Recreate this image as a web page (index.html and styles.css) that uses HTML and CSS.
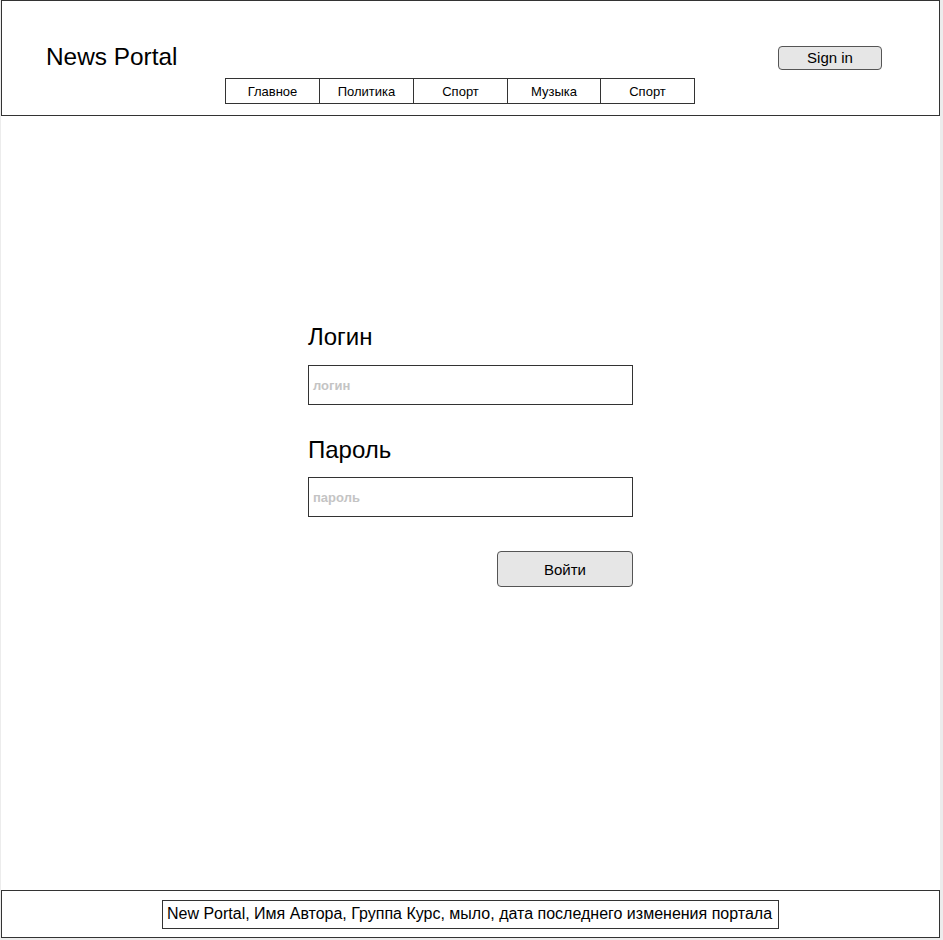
FILE: index.html
```html
<!DOCTYPE html>
<html lang="ru">
<head>
<meta charset="utf-8">
<title>News Portal</title>
<link rel="stylesheet" href="styles.css">
</head>
<body>
<div class="page">
  <header class="header">
    <div class="header-row">
      <div class="logo">News Portal</div>
      <button class="signin">Sign in</button>
    </div>
    <nav class="nav">
      <a class="nav-item">Главное</a>
      <a class="nav-item">Политика</a>
      <a class="nav-item">Спорт</a>
      <a class="nav-item narrow">Музыка</a>
      <a class="nav-item">Спорт</a>
    </nav>
  </header>
  <main class="main">
    <form class="login-form">
      <label class="field-label">Логин</label>
      <div class="field-input"><span class="placeholder">логин</span></div>
      <label class="field-label second">Пароль</label>
      <div class="field-input"><span class="placeholder">пароль</span></div>
      <div class="actions"><button type="button" class="submit">Войти</button></div>
    </form>
  </main>
  <footer class="footer">
    <div class="footer-box">New Portal, Имя Автора, Группа Курс, мыло, дата последнего изменения портала</div>
  </footer>
</div>
</body>
</html>
```

FILE: styles.css
```css
html, body {
  margin: 0;
  padding: 0;
}
body {
  background: #ececec;
  font-family: "Liberation Sans", Arial, sans-serif;
  color: #000;
  width: 943px;
  height: 940px;
  overflow: hidden;
}
.page {
  margin-left: 1px;
  width: 939px;
  height: 938px;
  display: flex;
  flex-direction: column;
  background: #fff;
}
.header {
  box-sizing: border-box;
  height: 116px;
  border: 1px solid #333;
  padding: 44px 57px 0 44px;
  display: flex;
  flex-direction: column;
}
.header-row {
  display: flex;
  justify-content: space-between;
  align-items: flex-start;
}
.logo {
  font-size: 24.4px;
  line-height: 24px;
}
.signin {
  margin-top: 1px;
  box-sizing: border-box;
  width: 104px;
  height: 24px;
  border: 1px solid #555;
  border-radius: 4px;
  background: #e6e6e6;
  font-family: "Liberation Sans", Arial, sans-serif;
  font-size: 15px;
  line-height: 20px;
  padding: 0;
  color: #000;
}
.nav {
  display: flex;
  margin: 8px 0 0 179px;
  border-left: 1px solid #333;
  align-self: flex-start;
}
.nav-item {
  box-sizing: border-box;
  width: 94px;
  height: 26px;
  border: 1px solid #333;
  border-left: none;
  display: flex;
  align-items: center;
  justify-content: center;
  font-size: 13px;
  color: #000;
}
.nav-item.narrow {
  width: 93px;
}
.main {
  flex: 1;
  padding-top: 208px;
}
.login-form {
  width: 325px;
  margin: 0 auto;
  display: flex;
  flex-direction: column;
}
.field-label {
  font-size: 24px;
  line-height: 26px;
  margin-bottom: 15px;
}
.field-label.second {
  margin-top: 32px;
  margin-bottom: 14px;
}
.field-input {
  box-sizing: border-box;
  height: 40px;
  border: 1px solid #333;
  display: flex;
  align-items: center;
  padding-left: 4px;
}
.placeholder {
  font-size: 13px;
  font-weight: bold;
  color: #c4c4c4;
}
.actions {
  display: flex;
  justify-content: flex-end;
  margin-top: 34px;
}
.submit {
  box-sizing: border-box;
  width: 136px;
  height: 36px;
  border: 1px solid #555;
  border-radius: 4px;
  background: #e6e6e6;
  font-family: "Liberation Sans", Arial, sans-serif;
  font-size: 15px;
  color: #000;
  padding: 0;
}
.footer {
  box-sizing: border-box;
  height: 48px;
  border: 1px solid #333;
  display: flex;
  align-items: center;
  justify-content: center;
}
.footer-box {
  box-sizing: border-box;
  border: 1px solid #333;
  height: 29px;
  padding: 0 6px 0 4px;
  display: flex;
  align-items: center;
  font-size: 16px;
}
```
